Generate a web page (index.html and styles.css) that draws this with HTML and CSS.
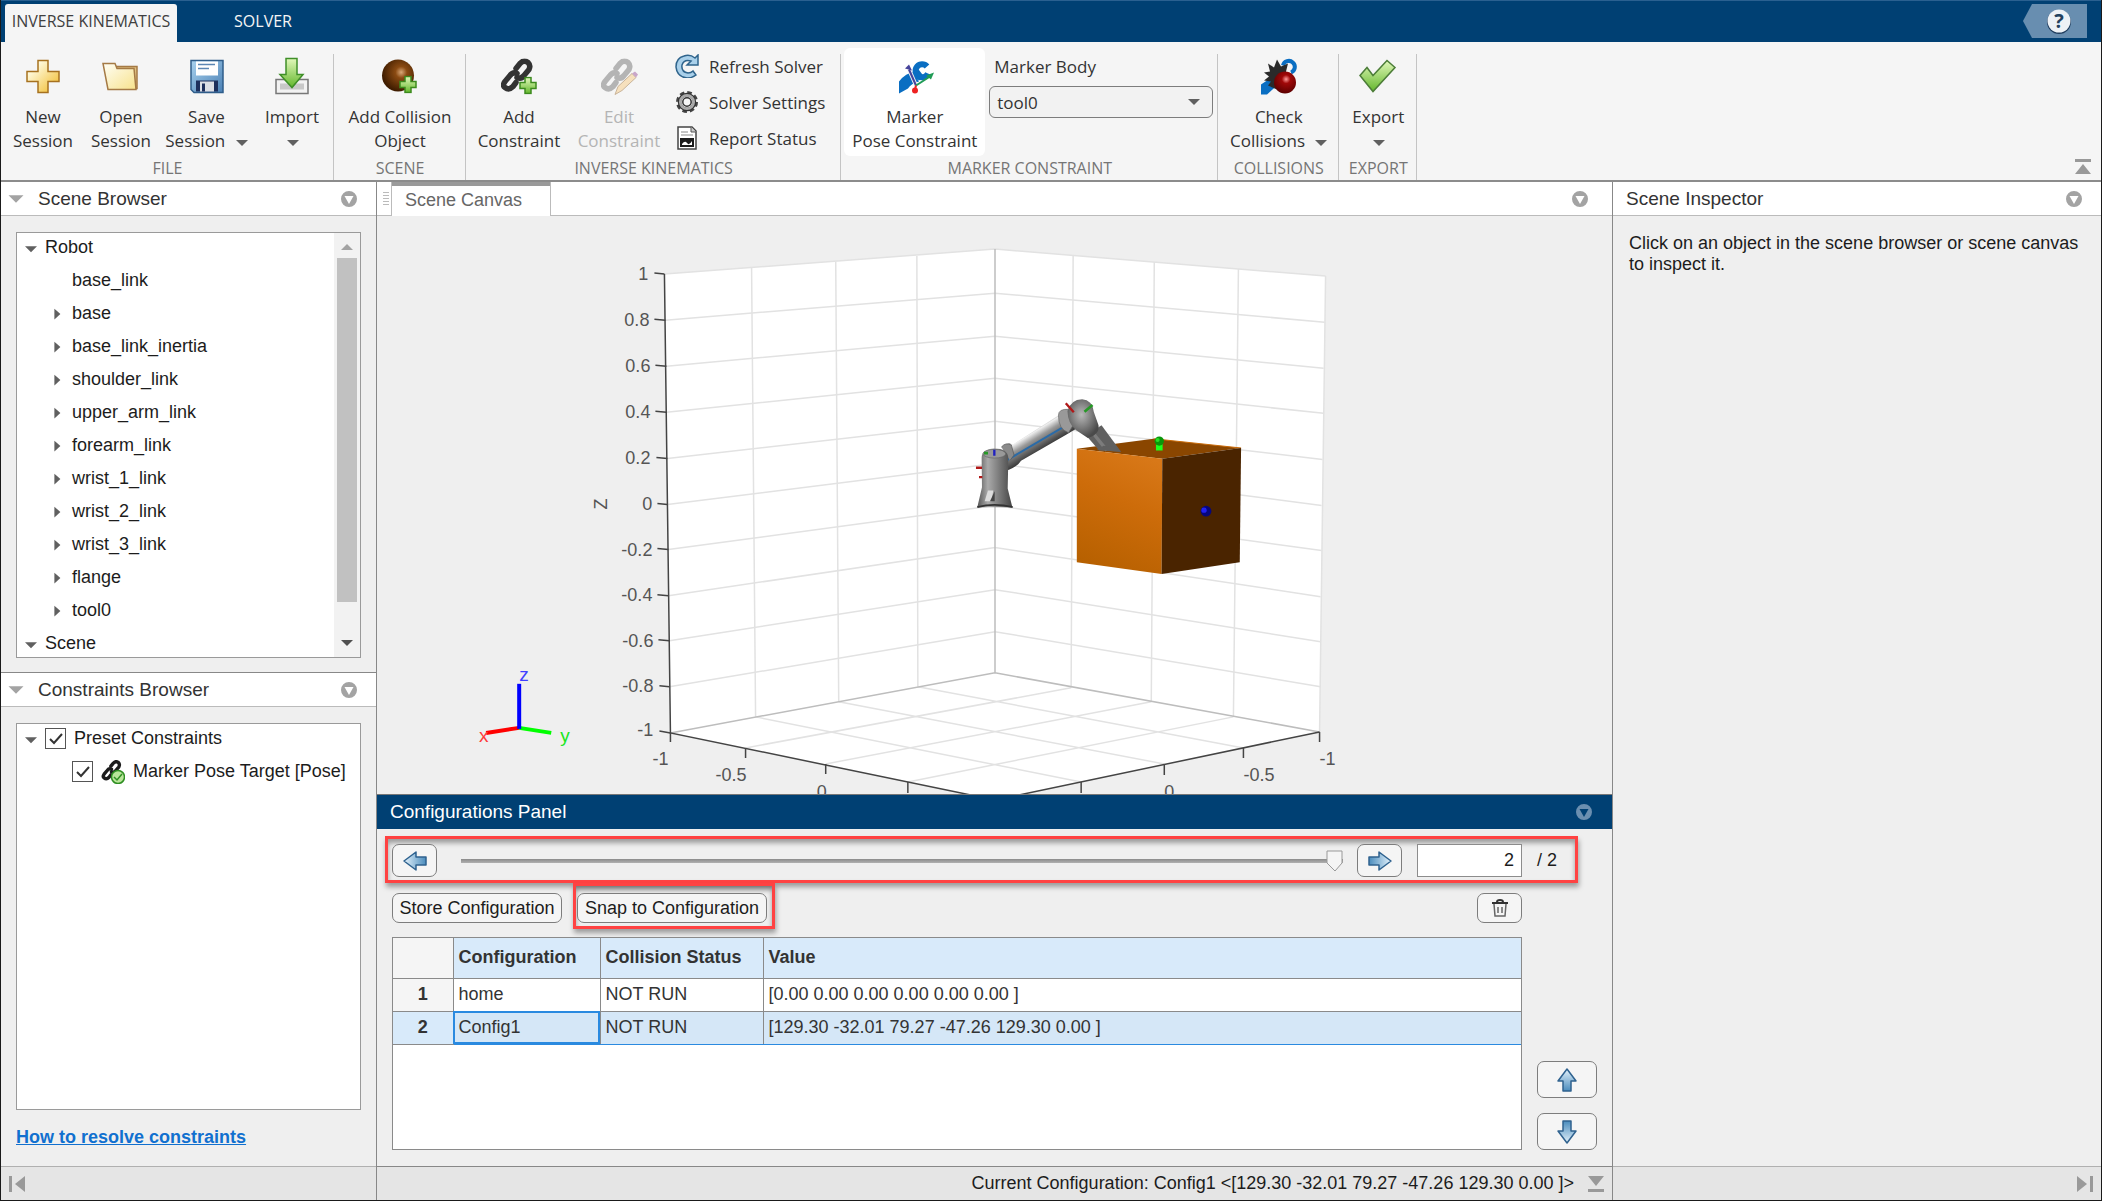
FILE: index.html
```html
<!DOCTYPE html>
<html lang="en">
<head>
  <meta charset="UTF-8" />
  <meta name="viewport" content="width=device-width, initial-scale=1.0"/>
  <title>Inverse Kinematics Designer</title>
  <link rel="stylesheet" href="styles.css">
</head>
<body>
  <!-- shared icons -->
  <svg class="defs" width="0" height="0" aria-hidden="true">
    <defs>
      <linearGradient id="gold" x1="0" y1="0" x2="1" y2="1"><stop offset="0.2" stop-color="#fffbe0"/><stop offset="1" stop-color="#f0b823"/></linearGradient>
      <linearGradient id="cream" x1="0" y1="0" x2="1" y2="1"><stop offset="0" stop-color="#fffef5"/><stop offset="1" stop-color="#f7e28c"/></linearGradient>
      <linearGradient id="green" x1="0" y1="0" x2="0" y2="1"><stop offset="0" stop-color="#e2f8bb"/><stop offset="1" stop-color="#63b72c"/></linearGradient>
      <linearGradient id="blue" x1="0" y1="0" x2="0" y2="1"><stop offset="0" stop-color="#e4f2fb"/><stop offset="1" stop-color="#4a8cbd"/></linearGradient>
      <linearGradient id="floppy" x1="0" y1="0" x2="1" y2="1"><stop offset="0" stop-color="#a9d2ee"/><stop offset="1" stop-color="#4a80b5"/></linearGradient>
      <radialGradient id="brown" cx="0.6" cy="0.4" r="0.6"><stop offset="0" stop-color="#d9a878"/><stop offset="0.3" stop-color="#8a4a12"/><stop offset="1" stop-color="#3e1c00"/></radialGradient>
      <radialGradient id="red" cx="0.55" cy="0.35" r="0.65"><stop offset="0" stop-color="#ff9c9c"/><stop offset="0.3" stop-color="#a00808"/><stop offset="1" stop-color="#5c0000"/></radialGradient>
      <symbol id="i-down" viewBox="0 0 12 8"><path d="M0 1h12l-6 6z"/></symbol>
      <symbol id="i-menu" viewBox="0 0 16 16"><path fill-rule="evenodd" d="M8 0a8 8 0 1 1 0 16A8 8 0 0 1 8 0zM3.5 5 8 13l4.500-8z"/></symbol>
      <symbol id="i-plus" viewBox="0 0 18 18"><path d="M6 1h6v5h5v6h-5v5H6v-5H1V6h5z" fill="url(#green)" stroke="#3c8a1e" stroke-width="1.500"/></symbol>
      <symbol id="i-chain" viewBox="0 0 32 34">
        <g fill="none" stroke="currentColor" stroke-width="5.500" stroke-linecap="round" stroke-linejoin="round">
          <path d="M15 10l4-5q4-4 8-1 3 3 1 7l-5 6q-3 4-7 2"/>
          <path d="M16 15q-4-2-7 2l-5 6q-3 4 0 6 4 3 8-1l3-4"/>
        </g>
      </symbol>
      <symbol id="i-arrow" viewBox="0 0 26 26"><path d="M13 2l9 12h-5v10H9V14H4z" fill="url(#blue)" stroke="#2f628f" stroke-width="1.500" stroke-linejoin="round"/></symbol>
    </defs>
  </svg>

  <header class="titlebar">
    <nav class="tabs">
      <button class="tab active">INVERSE KINEMATICS</button>
      <button class="tab">SOLVER</button>
    </nav>
    <button class="help" aria-label="Help">
      <svg width="64" height="34" viewBox="0 0 64 34">
        <path d="M0 17 9 0h55v34H9z" fill="#688eb0"/>
        <circle cx="36" cy="18" r="12" fill="#1f3d5e"/>
        <circle cx="36" cy="17" r="11.500" fill="#eef2f6"/>
        <text x="36" y="24" text-anchor="middle" class="help-mark">?</text>
      </svg>
    </button>
  </header>

  <div class="toolstrip">
    <section class="group">
      <div class="group-items">
        <button class="tool new">
          <svg width="36" height="36" viewBox="0 0 36 36"><path d="M13 2h10v11h11v10H23v11H13V23H2V13h11z" fill="url(#gold)" stroke="#a6711f" stroke-width="1.500"/></svg>
          <span>New<br>Session</span>
        </button>
        <button class="tool folder">
          <svg width="38" height="36" viewBox="0 0 38 36"><path d="M14 8h21v22H8z" fill="#e0c080" stroke="#a57a45" stroke-width="1.500"/><path d="M1 5h12l2 5h17l2 21H6z" fill="url(#cream)" stroke="#a57a45" stroke-width="1.500"/></svg>
          <span>Open<br>Session</span>
        </button>
        <button class="tool save">
          <svg width="36" height="36" viewBox="0 0 36 36"><path d="M2 2h32v32H5l-3-3z" fill="url(#floppy)" stroke="#2f5d8a" stroke-width="1.500"/><path d="M7 3h22v14H7z" fill="#fff"/><path d="M9 6h17M9 10h11" stroke="#5b86b4" stroke-width="1.500"/><path d="M7 22h22v11H7z" fill="#1d2f5c"/><path d="M11 23h14v10H11z" fill="#dcdfe6"/><path d="M13 25h3v8h-3z" fill="#1d2f5c"/></svg>
          <span>Save<br>Session <svg class="caret" width="12" height="8"><use href="#i-down"/></svg></span>
        </button>
        <button class="tool import">
          <svg width="36" height="38" viewBox="0 0 36 38"><path d="M2 22h32v14H2z" fill="#f2f2f2" stroke="#777" stroke-width="1.500"/><path d="M6 26h24v6H6z" fill="#c8c8c8"/><path d="M12 1h11v16h6L18 30 6 17h6z" fill="url(#green)" stroke="#3f8f28" stroke-width="1.500"/></svg>
          <span>Import<br><svg class="caret" width="12" height="8"><use href="#i-down"/></svg></span>
        </button>
      </div>
      <h2>FILE</h2>
    </section>

    <section class="group">
      <div class="group-items">
        <button class="tool collision">
          <svg width="38" height="36" viewBox="0 0 38 36"><circle cx="17" cy="17" r="16" fill="url(#brown)"/><use href="#i-plus" x="18" y="17" width="18" height="18"/></svg>
          <span>Add Collision<br>Object</span>
        </button>
      </div>
      <h2>SCENE</h2>
    </section>

    <section class="group">
      <div class="group-items">
        <button class="tool constraint">
          <svg width="38" height="38" viewBox="0 0 38 38"><use href="#i-chain" x="1" y="1" width="32" height="34"/><use href="#i-plus" x="19" y="19" width="18" height="18"/></svg>
          <span>Add<br>Constraint</span>
        </button>
        <button class="tool constraint" disabled>
          <svg width="38" height="38" viewBox="0 0 38 38"><use href="#i-chain" x="1" y="1" width="32" height="34"/><path d="M15 37l3-8 14-13 4 4-14 13z" fill="#f6e0bd" stroke="#c9b49a"/><path d="M32 16l4 4 2-3-3-3z" fill="#c9a6c9"/></svg>
          <span>Edit<br>Constraint</span>
        </button>
        <div class="tool-list">
          <button><svg width="24" height="24" viewBox="0 0 24 24"><path d="M23 1v10H12l4-4q-7-2-9 4-1 7 6 8 3 0 5-2l3 4q-4 3-9 3Q2 23 1 13 1 4 9 2q6-2 11 2z" fill="#a9d0ea" stroke="#2f648c" stroke-width="1.500"/></svg>Refresh Solver</button>
          <button><svg width="24" height="24" viewBox="0 0 24 24"><circle cx="12" cy="12" r="9.500" fill="none" stroke="#444" stroke-width="3" stroke-dasharray="4.500 2.960"/><circle cx="12" cy="12" r="7.500" fill="none" stroke="#333" stroke-width="3.500"/><circle cx="12" cy="12" r="6.800" fill="none" stroke="#aaa" stroke-width="2.500"/><circle cx="12" cy="12" r="4.200" fill="#f5f5f5" stroke="#333" stroke-width="1.500"/></svg>Solver Settings</button>
          <button><svg width="24" height="24" viewBox="0 0 24 24"><path d="M3 1h14l4 4v18H3z" fill="#fff" stroke="#444" stroke-width="1.500"/><path d="M16 1v5h5" fill="#ccc" stroke="#555"/><path d="M6 6h7M6 9h12" stroke="#888"/><path d="M5 12h14v9H5z" fill="#1b1b1b"/><path d="M7 18q3-4 5-1t5-2v4H7z" fill="#fff"/></svg>Report Status</button>
        </div>
      </div>
      <h2>INVERSE KINEMATICS</h2>
    </section>

    <section class="group">
      <div class="group-items">
        <button class="tool marker pressed">
          <svg width="38" height="38" viewBox="0 0 38 38"><path d="M3 24q7-9 15-9l5 9q-8 2-11 7l-9 5z" fill="#0a6ec2"/><path d="M16 15l5-5 7 9-5 4z" fill="#0a6ec2"/><path d="M31 9a6.500 6.500 0 1 0 1 7" fill="none" stroke="#0a6ec2" stroke-width="6"/><path d="M20 28l-7-16" stroke="#f5f5f5" stroke-width="4"/><path d="M20 28l-7-16" stroke="#46439b" stroke-width="2"/><path d="M20 28l14-9" stroke="#1f9b55" stroke-width="2"/><path d="M9 11l4-4 3 6z" fill="#46439b"/><path d="M38 15l-3 7-5-4z" fill="#1f9b55"/><path d="M20 28l-1 4" stroke="#ee2222" stroke-width="2"/><circle cx="19" cy="33" r="3" fill="#ee2222"/></svg>
          <span>Marker<br>Pose Constraint</span>
        </button>
        <div class="marker-body">
          <label for="markerBody">Marker Body</label>
          <select id="markerBody"><option>tool0</option></select>
        </div>
      </div>
      <h2>MARKER CONSTRAINT</h2>
    </section>

    <section class="group">
      <div class="group-items">
        <button class="tool check">
          <svg width="38" height="38" viewBox="0 0 38 38"><path d="M1 27l9-6 7 7-10 9H1z" fill="#0a6ec2"/><path d="M23 8a6 6 0 1 1 8 7" fill="none" stroke="#0a6ec2" stroke-width="4"/><path d="M8 6l6 4 3-8 4 7 7-3-2 8 4 14-13 4-9-4 3-4-7-1 5-4-5-4 6-1z" fill="#2a2a2a"/><circle cx="25" cy="25" r="11" fill="url(#red)"/></svg>
          <span>Check<br>Collisions <svg class="caret" width="12" height="8"><use href="#i-down"/></svg></span>
        </button>
      </div>
      <h2>COLLISIONS</h2>
    </section>

    <section class="group">
      <div class="group-items">
        <button class="tool export">
          <svg width="38" height="36" viewBox="0 0 38 36"><path d="M1 17l7-8 6 8L28 2l8 7-22 24z" fill="url(#green)" stroke="#4c7d38" stroke-width="1.500"/></svg>
          <span>Export<br><svg class="caret" width="12" height="8"><use href="#i-down"/></svg></span>
        </button>
      </div>
      <h2>EXPORT</h2>
    </section>

    <button class="collapse" aria-label="Minimize toolstrip"><svg width="16" height="16" viewBox="0 0 16 16"><path d="M0 0h16v3H0zM8 5l8 10H0z"/></svg></button>
  </div>

  <main class="workspace">
    <aside class="left">
      <section class="panel">
        <div class="panel-head">
          <svg class="fold" width="16" height="10"><use href="#i-down"/></svg>
          <h3>Scene Browser</h3>
          <button class="menu" aria-label="Scene Browser menu"><svg width="16" height="16"><use href="#i-menu"/></svg></button>
        </div>
        <div class="panel-body">
          <div class="box">
            <ul class="tree">
              <li class="open">Robot</li>
              <li class="child">base_link</li>
              <li class="child closed">base</li>
              <li class="child closed">base_link_inertia</li>
              <li class="child closed">shoulder_link</li>
              <li class="child closed">upper_arm_link</li>
              <li class="child closed">forearm_link</li>
              <li class="child closed">wrist_1_link</li>
              <li class="child closed">wrist_2_link</li>
              <li class="child closed">wrist_3_link</li>
              <li class="child closed">flange</li>
              <li class="child closed">tool0</li>
              <li class="open">Scene</li>
            </ul>
            <div class="scrollbar">
              <svg class="up" width="12" height="8"><use href="#i-down"/></svg>
              <div class="track"><div class="thumb"></div></div>
              <svg class="down" width="12" height="8"><use href="#i-down"/></svg>
            </div>
          </div>
        </div>
      </section>

      <section class="panel">
        <div class="panel-head">
          <svg class="fold" width="16" height="10"><use href="#i-down"/></svg>
          <h3>Constraints Browser</h3>
          <button class="menu" aria-label="Constraints Browser menu"><svg width="16" height="16"><use href="#i-menu"/></svg></button>
        </div>
        <div class="panel-body">
          <div class="box">
            <ul class="tree">
              <li class="open"><label><input type="checkbox" checked>Preset Constraints</label></li>
              <li class="child"><label><input type="checkbox" checked>
                <svg width="24" height="24" viewBox="0 0 24 24"><use href="#i-chain" x="0" y="0" width="21" height="21"/><circle cx="17" cy="17" r="6.500" fill="#b9e59a" stroke="#2f8f22" stroke-width="1.500"/><path d="M13 17l3 3 5-6" fill="none" stroke="#2f8f22" stroke-width="1.500"/></svg>Marker Pose Target [Pose]</label></li>
            </ul>
          </div>
          <a class="hint" href="#">How to resolve constraints</a>
        </div>
      </section>

      <footer class="status">
        <button aria-label="Collapse left"><svg width="16" height="16" viewBox="0 0 16 16"><path d="M0 0h3v16H0zM16 0v16L6 8z"/></svg></button>
      </footer>
    </aside>

    <section class="center">
      <div class="doc-tabs">
        <span class="grip"></span>
        <button class="doc-tab">Scene Canvas</button>
        <button class="menu" aria-label="Scene Canvas menu"><svg width="16" height="16"><use href="#i-menu"/></svg></button>
      </div>

      <div class="canvas">
        <svg viewBox="377 216 1235 577" preserveAspectRatio="xMidYMid slice">
          <defs>
            <linearGradient id="front" x1="0.600" y1="0" x2="0.300" y2="1"><stop offset="0" stop-color="#d87818"/><stop offset="0.400" stop-color="#cd6c0a"/><stop offset="1" stop-color="#b66000"/></linearGradient>
            <linearGradient id="metal" x1="0" y1="0" x2="1" y2="0"><stop offset="0" stop-color="#555"/><stop offset="0.300" stop-color="#aaa"/><stop offset="0.650" stop-color="#777"/><stop offset="1" stop-color="#444"/></linearGradient>
            <linearGradient id="arm" gradientUnits="userSpaceOnUse" x1="210" y1="140" x2="250" y2="205"><stop offset="0" stop-color="#666"/><stop offset="0.250" stop-color="#eee"/><stop offset="0.500" stop-color="#999"/><stop offset="1" stop-color="#3a3a3a"/></linearGradient>
            <radialGradient id="joint" cx="0.450" cy="0.400" r="0.600"><stop offset="0" stop-color="#b8b8b8"/><stop offset="1" stop-color="#4a4a4a"/></radialGradient>
          </defs>

          <!-- axes walls and floor -->
          <path d="M665 274 995 249 1325 276 1319 731 995 799 671 732z" fill="#fff"/>
          <g class="grid">
            <path d="M752 268 756 716M836 262l3 439M917 256l1 430M1073 256l-2 431M1154 262l-3 439M1238 269l-5 447M1325 276l-6 455"/>
            <path d="M665 274 995 249l330 27M666 320l329-27 329 29M667 366l328-30 328 32M667 412l328-34 328 35M668 458l327-37 327 38M668 504l327-41 326 42M669 549l326-44 326 45M669 595l326-48 325 49M670 640l325-51 325 52M670 686l325-55 325 55"/>
            <path d="M746 747l325-60M826 763l325-62M908 781l325-65M756 716l325 65M839 701l325 62M918 686l325 61"/>
          </g>
          <path class="edge" d="M995 249v423M671 732l324-60 324 59"/>
          <g class="axis">
            <path d="M665 274 671 732 995 799 1319 731"/>
            <path d="M655 273l10 1M655 319l11 1M656 365l11 1M656 411l11 1M657 457l11 1M658 503l10 1M658 548l11 1M658 594l11 1M659 639l11 1M660 685l10 1M660 730l11 2"/>
            <path d="M671 732v9M746 747v10M826 763v10M908 781v11M1319 731v10M1243 747v10M1164 763v11M1081 781v11"/>
          </g>
          <g class="ticks end">
            <text x="649" y="280">1</text><text x="650" y="326">0.8</text><text x="651" y="372">0.6</text><text x="651" y="418">0.4</text><text x="651" y="464">0.2</text><text x="653" y="509">0</text><text x="653" y="555">-0.2</text><text x="653" y="600">-0.4</text><text x="654" y="646">-0.6</text><text x="654" y="691">-0.8</text><text x="654" y="735">-1</text>
            <text x="669" y="764">-1</text><text x="747" y="780">-0.5</text><text x="827" y="797">0</text>
          </g>
          <g class="ticks">
            <text x="1319" y="764">-1</text><text x="1243" y="780">-0.5</text><text x="1164" y="797">0</text>
            <text x="-509" y="608" transform="rotate(-90)">Z</text>
          </g>

          <!-- orientation triad -->
          <g class="triad">
            <path d="M520 727l-33 5" stroke="#f00"/><path d="M520 727l32 5" stroke="#0f0"/><path d="M520 728v-45" stroke="#00f"/>
            <text x="480" y="741" fill="#ff3b3b">x</text><text x="561" y="741" fill="#1be61b">y</text><text x="520" y="680" fill="#4040ff">z</text>
          </g>

          <!-- robot and collision box -->
          <svg x="960" y="380" width="300" height="210" viewBox="0 0 900 630">
            <path d="M350 205 580 175 842 203 606 235z" fill="#8a4600"/>
            <path d="M580 175l262 28" stroke="#c96a08" stroke-width="3"/>
            <path d="M128 200l20-12 10 5 138-88q8-18 30-20l22 60-30 18-135 78q-15 22-45 30z" fill="url(#arm)"/>
            <path d="M140 240 340 122" stroke="#2a6ba8" stroke-width="6"/>
            <path d="M124 200q14-16 30-6l8 30-12 16" fill="#8a8a8a" stroke="#555" stroke-width="2"/>
            <path d="M295 105q0-20 30-18l25 30-25 40q-30-10-30-52" fill="#999" stroke="#666" stroke-width="2"/>
            <path d="M378 165l46-30 58 78-65-3z" fill="#606060"/>
            <path d="M400 160l40 50" stroke="#7c7c7c" stroke-width="10"/>
            <path d="M322 92q10-34 44-35 30 2 35 38l14 40q4 28-32 38l-36-24q-24-20-25-57z" fill="url(#joint)"/>
            <path d="M65 232q0-26 38-28 40 0 42 28l-2 92 14 56H52l14-60z" fill="url(#metal)"/>
            <ellipse cx="103" cy="220" rx="34" ry="13" fill="#999" stroke="#666" stroke-width="2"/>
            <path d="M84 330l-10 32h20l6-32z" fill="#ddd"/>
            <path d="M104 332l-14 30h14z" fill="#444"/>
            <path d="M52 380q50-14 106 0" fill="none" stroke="#333" stroke-width="5"/>
            <path d="M48 262h18M57 290h10M317 69l24 27" stroke="#b01818" stroke-width="7"/>
            <path d="M373 94l24-20M72 218h12" stroke="#269926" stroke-width="8"/>
            <path d="M103 208v18" stroke="#2020c0" stroke-width="7"/>
            <path d="M350 205 606 235 604 580 350 545z" fill="url(#front)"/>
            <path d="M410 208l20-12 40 5 13 14z" fill="#606060"/>
            <path d="M606 235 842 203 838 545 604 580z" fill="#4a2400"/>
            <path d="M587 190h20v20h-20z" fill="#1cff1c"/>
            <circle cx="597" cy="182" r="14" fill="#0a960a"/><circle cx="592" cy="179" r="6" fill="#27dd27"/>
            <circle cx="737" cy="392" r="16" fill="#06067c"/><circle cx="731" cy="389" r="8" fill="#2222ee"/>
          </svg>
        </svg>
      </div>

      <section class="configs">
        <div class="configs-head">
          <h3>Configurations Panel</h3>
          <button class="menu" aria-label="Configurations Panel menu"><svg width="16" height="16"><use href="#i-menu"/></svg></button>
        </div>

        <div class="stepper">
          <button class="btn" aria-label="Previous"><svg class="to-left" width="26" height="26"><use href="#i-arrow"/></svg></button>
          <input class="slider" type="range" min="1" max="2" value="2" aria-label="Configuration">
          <button class="btn" aria-label="Next"><svg class="to-right" width="26" height="26"><use href="#i-arrow"/></svg></button>
          <input class="index" id="index" type="text" value="2">
          <label for="index">/ 2</label>
        </div>

        <div class="actions">
          <button class="btn store">Store Configuration</button>
          <div class="callout"><button class="btn">Snap to Configuration</button></div>
          <button class="btn trash" aria-label="Delete"><svg width="18" height="20" viewBox="0 0 18 20"><path d="M1 5h16M6 4q0-2 3-2t3 2" fill="none" stroke="#333" stroke-width="2"/><path d="M3 6l1 12h10l1-12M7 9v6M11 9v6" fill="none" stroke="#666" stroke-width="1.500"/></svg></button>
        </div>

        <div class="table-row">
          <div class="table-box">
            <table>
              <colgroup><col class="c-num"><col class="c-name"><col class="c-status"><col></colgroup>
              <thead>
                <tr><th></th><th>Configuration</th><th>Collision Status</th><th>Value</th></tr>
              </thead>
              <tbody>
                <tr><th>1</th><td>home</td><td>NOT RUN</td><td>[0.00 0.00 0.00 0.00 0.00 0.00 ]</td></tr>
                <tr class="selected"><th>2</th><td class="current">Config1</td><td>NOT RUN</td><td>[129.30 -32.01 79.27 -47.26 129.30 0.00 ]</td></tr>
              </tbody>
            </table>
          </div>
          <div class="order">
            <button class="btn" aria-label="Move up"><svg width="26" height="26"><use href="#i-arrow"/></svg></button>
            <button class="btn" aria-label="Move down"><svg class="to-down" width="26" height="26"><use href="#i-arrow"/></svg></button>
          </div>
        </div>
      </section>

      <footer class="status">
        <span>Current Configuration: Config1 &lt;[129.30 -32.01 79.27 -47.26 129.30 0.00 ]&gt;</span>
        <button aria-label="Collapse bottom"><svg width="16" height="16" viewBox="0 0 16 16"><path d="M0 0h16L8 10zM0 13h16v3H0z"/></svg></button>
      </footer>
    </section>

    <aside class="right">
      <div class="panel-head">
        <h3>Scene Inspector</h3>
        <button class="menu" aria-label="Scene Inspector menu"><svg width="16" height="16"><use href="#i-menu"/></svg></button>
      </div>
      <p>Click on an object in the scene browser or scene canvas to inspect it.</p>
      <footer class="status">
        <button aria-label="Collapse right"><svg width="16" height="16" viewBox="0 0 16 16"><path d="M0 0v16l10-8zM13 0h3v16h-3z"/></svg></button>
      </footer>
    </aside>
  </main>
</body>
</html>
```
FILE: styles.css
```css
* {
    box-sizing: border-box;
}
body {
    margin: 0;
    height: 100vh;
    display: flex;
    flex-direction: column;
    border: 1px solid #1a1a1a;
    border-top: none;
    background-color: #efefef;
    font-family: "Liberation Sans", Arial, sans-serif;
    font-size: 18px;
    color: #1c1c1c;
    overflow: hidden;
}
button, input, select {
    font: inherit;
    color: inherit;
    margin: 0;
}
button {
    border: none;
    background: none;
    padding: 0;
    cursor: pointer;
}
svg {
    display: block;
    flex: none;
}
h2, h3 {
    margin: 0;
    font-size: inherit;
    font-weight: normal;
}
.defs {
    position: absolute;
}

/* title bar */
.titlebar {
    display: flex;
    justify-content: space-between;
    height: 42px;
    padding: 3px 14px 0 4px;
    border-top: 1px solid #2a6090;
    background-color: #004073;
    font-family: "Open Sans", "Noto Sans", sans-serif;
    font-size: 16px;
}
.tabs {
    display: flex;
}
.tab {
    width: 172px;
    padding-bottom: 5px;
    color: #f5f5f5;
    border-radius: 3px 3px 0 0;
}
.tab.active {
    background-color: #f5f5f5;
    color: #404040;
}
.help {
    height: 34px;
}
.help-mark {
    font: bold 20px "Open Sans", sans-serif;
    fill: #24425f;
}

/* toolstrip */
.toolstrip {
    display: flex;
    height: 140px;
    border-bottom: 2px solid #8c8c8c;
    background-color: #f5f5f5;
    font-family: "Open Sans", "Noto Sans", sans-serif;
    font-size: 17px;
    color: #333;
}
.group {
    display: flex;
    flex-direction: column;
    padding: 6px 3px 0;
    background: linear-gradient(#c4c4c4, #c4c4c4) right bottom / 1px 126px no-repeat;
}
.group-items {
    display: flex;
    height: 109px;
}
.group h2 {
    font-size: 16px;
    line-height: 24px;
    text-align: center;
    color: #757575;
}
.tool {
    display: flex;
    flex-direction: column;
    align-items: center;
    line-height: 24px;
}
.tool > svg {
    height: 57px;
}
.tool .caret {
    display: inline-block;
    margin-left: 6px;
    fill: #606060;
}
.tool.import .caret, .tool.export .caret {
    margin-left: 2px;
}
.tool:disabled {
    color: #b4b4b4;
}
.tool.new, .tool.folder, .tool.import {
    width: 78px;
}
.tool.save {
    width: 93px;
}
.tool.collision {
    width: 126px;
}
.tool.constraint {
    width: 100px;
}
.tool.marker {
    width: 141px;
}
.tool.check {
    width: 115px;
}
.tool.export {
    width: 72px;
}
.pressed {
    background-color: #fff;
    border-radius: 6px;
}
.tool-list {
    display: flex;
    flex-direction: column;
    padding: 0 13px 0 6px;
}
.tool-list button {
    display: flex;
    align-items: center;
    gap: 10px;
    height: 36px;
}
.marker-body {
    padding: 0 2px 0 4px;
}
.marker-body label {
    display: block;
    padding-left: 5px;
    line-height: 38px;
}
.marker-body select {
    width: 224px;
    height: 32px;
    padding: 0 7px;
    border: 1px solid #7d7d7d;
    border-radius: 6px;
    appearance: none;
    background: #f2f2f2 url("data:image/svg+xml,%3Csvg xmlns='http://www.w3.org/2000/svg' width='12' height='8'%3E%3Cpath d='M0 1h12l-6 6z' fill='%23606060'/%3E%3C/svg%3E") no-repeat right 12px center;
}
.collapse {
    align-self: flex-end;
    margin: 0 10px 5px auto;
    fill: #999;
}

/* workspace */
.workspace {
    flex: 1;
    min-height: 0;
    display: grid;
    grid-template-columns: 376px 1fr 489px;
}
.left {
    display: grid;
    grid-template-rows: 490fr 494fr 34px;
    min-height: 0;
    border-right: 1px solid #888;
}
.panel {
    display: flex;
    flex-direction: column;
    min-height: 0;
}
.panel + .panel {
    border-top: 1px solid #888;
}
.panel-head {
    display: flex;
    align-items: center;
    height: 34px;
    flex: none;
    padding: 0 19px 0 7px;
    background-color: #fff;
    border-bottom: 1px solid #bbb;
    font-size: 19px;
    color: #333;
}
.fold {
    margin-right: 14px;
    fill: #a3a3a3;
}
.menu {
    margin-left: auto;
    fill: #a3a3a3;
}
.panel-body {
    flex: 1;
    min-height: 0;
    display: flex;
    flex-direction: column;
    padding: 16px 15px 14px;
}
.box {
    flex: 1;
    min-height: 0;
    display: flex;
    border: 1px solid #9a9a9a;
    background-color: #fff;
    overflow: hidden;
}
.tree {
    flex: 1;
    list-style: none;
    margin: -2px 0 0;
    padding: 0;
}
.tree li {
    display: flex;
    align-items: center;
    height: 33px;
    padding-left: 8px;
    white-space: nowrap;
}
.tree li.child {
    padding-left: 35px;
}
.tree li::before {
    content: "";
    flex: none;
    width: 12px;
    height: 12px;
    margin-right: 8px;
}
.tree li.open::before {
    background-color: #606060;
    clip-path: polygon(0 40%, 100% 40%, 50% 90%);
}
.tree li.closed::before {
    background-color: #606060;
    clip-path: polygon(20% 10%, 70% 55%, 20% 100%);
}
.tree label {
    display: flex;
    align-items: center;
    gap: 8px;
}
.tree input {
    appearance: none;
    width: 21px;
    height: 21px;
    border: 1px solid #555;
    background: #fff url("data:image/svg+xml,%3Csvg xmlns='http://www.w3.org/2000/svg' width='19' height='19'%3E%3Cpath d='M4 10l4 4 8-9' fill='none' stroke='%23333' stroke-width='2'/%3E%3C/svg%3E") center no-repeat;
}
.scrollbar {
    display: flex;
    flex-direction: column;
    align-items: center;
    justify-content: space-between;
    width: 26px;
    padding: 10px 3px;
    background-color: #f2f2f2;
}
.scrollbar .track {
    flex: 1;
    width: 20px;
    margin: 7px 0;
}
.scrollbar .thumb {
    height: 92%;
    background-color: #c1c1c1;
}
.scrollbar .up {
    transform: rotate(180deg);
    fill: #a3a3a3;
}
.scrollbar .down {
    fill: #505050;
}
.hint {
    margin: 15px 0 3px;
    line-height: 24px;
    font-weight: bold;
    color: #1170cf;
}
.status {
    display: flex;
    align-items: center;
    height: 34px;
    padding: 0 8px;
    border-top: 1px solid #b0b0b0;
    background-color: #e5e5e5;
    fill: #999;
}

/* scene canvas */
.center {
    display: flex;
    flex-direction: column;
    min-width: 0;
    min-height: 0;
}
.doc-tabs {
    display: flex;
    align-items: center;
    height: 34px;
    flex: none;
    padding-right: 24px;
    background: linear-gradient(#bbb, #bbb) left bottom / 100% 1px no-repeat #fff;
}
.grip {
    width: 6px;
    height: 14px;
    margin: 0 2px 0 6px;
    background: repeating-linear-gradient(#bbb 0 1px, #fff 1px 3px);
}
.doc-tab {
    height: 34px;
    padding: 3px 28px 0 13px;
    border: 1px solid #bbb;
    border-width: 0 1px;
    box-shadow: inset 0 4px #9a9a9a;
    background-color: #fff;
    color: #666;
}
.canvas {
    flex: 1;
    min-height: 0;
}
.canvas > svg {
    width: 100%;
    height: 100%;
}
.grid {
    fill: none;
    stroke: #e2e2e2;
    stroke-width: 1.5;
}
.edge {
    fill: none;
    stroke: #bdbdbd;
    stroke-width: 1.5;
}
.axis {
    fill: none;
    stroke: #444;
    stroke-width: 1.5;
}
.ticks {
    font-size: 18px;
    fill: #555;
}
.end {
    text-anchor: end;
}
.triad {
    fill: none;
    stroke-width: 4;
}
.triad text {
    font-size: 19px;
}

/* configurations */
.configs {
    border-top: 1px solid #777;
}
.configs-head {
    display: flex;
    align-items: center;
    height: 34px;
    padding: 0 20px 0 13px;
    background-color: #004073;
    color: #fff;
    font-size: 19px;
}
.configs-head .menu {
    fill: #6b8fb0;
}
.btn {
    display: flex;
    align-items: center;
    justify-content: center;
    width: 45px;
    height: 33px;
    border: 1px solid #7d7d7d;
    border-radius: 7px;
    background-color: #f5f5f5;
}
.to-left {
    transform: rotate(-90deg);
}
.to-right {
    transform: rotate(90deg);
}
.to-down {
    transform: rotate(180deg);
}
.stepper, .callout {
    border: 3px solid #ff4242;
    box-shadow: 1px 4px 5px rgba(0, 0, 0, 0.35), inset 0 4px 5px rgba(0, 0, 0, 0.35);
}
.stepper {
    display: flex;
    align-items: center;
    margin: 7px 34px 0 8px;
    padding: 5px 4px 3px;
}
.slider {
    flex: 1;
    height: 24px;
    margin: 0 14px 0 24px;
    appearance: none;
    background: linear-gradient(#8a8a8a, #b0b0b0) center / 100% 4px no-repeat;
}
.slider::-webkit-slider-thumb {
    appearance: none;
    width: 17px;
    height: 22px;
    background: url("data:image/svg+xml,%3Csvg xmlns='http://www.w3.org/2000/svg' width='17' height='22'%3E%3Cpath d='M1 1h15v12l-7 8-8-8z' fill='%23f5f5f5' stroke='%23999'/%3E%3C/svg%3E") no-repeat;
}
.index {
    width: 105px;
    height: 33px;
    margin: 0 15px;
    padding: 0 7px;
    border: 1px solid #8c8c8c;
    background-color: #fff;
    text-align: right;
}
.stepper label {
    width: 34px;
}
.actions {
    display: flex;
    align-items: flex-end;
    padding: 0 90px 0 15px;
}
.actions .btn {
    height: 30px;
}
.actions > .btn {
    margin-bottom: 6px;
}
.actions .store {
    width: 170px;
}
.callout {
    margin-left: 11px;
    padding: 7px 5px 3px 1px;
}
.callout .btn {
    width: 190px;
}
.trash {
    margin-left: auto;
}
.table-row {
    display: flex;
    gap: 15px;
    height: 229px;
    padding: 0 15px 16px;
    margin-top: 8px;
}
.table-box {
    flex: 1;
    border: 1px solid #8a8a8a;
    background-color: #fff;
}
table {
    width: 100%;
    table-layout: fixed;
    border-collapse: collapse;
}
.c-num {
    width: 60px;
}
.c-name {
    width: 147px;
}
.c-status {
    width: 163px;
}
th, td {
    height: 33px;
    padding: 0 5px;
    border: 1px solid #8a8a8a;
    text-align: left;
    color: #333;
}
tr > :first-child {
    border-left: none;
}
tr > :last-child {
    border-right: none;
}
thead th {
    height: 40px;
    border-top: none;
    background-color: #d8eafa;
}
tbody th, thead th:first-child {
    text-align: center;
    background-color: #f5f5f5;
}
.selected th {
    background-color: #d8eafa;
}
.selected td {
    background-color: #d5e7f7;
    border-top-color: #2a8ae0;
    border-bottom-color: #2a8ae0;
}
.selected td.current {
    outline: 2px solid #2a8ae0;
    outline-offset: -2px;
}
.order {
    display: flex;
    flex-direction: column;
    justify-content: flex-end;
    gap: 15px;
}
.order .btn {
    width: 60px;
    height: 37px;
}
.center .status {
    flex: none;
    justify-content: flex-end;
    gap: 14px;
    border-top-color: #888;
}

/* inspector */
.right {
    display: flex;
    flex-direction: column;
    border-left: 1px solid #888;
}
.right .panel-head {
    padding-left: 13px;
}
.right p {
    flex: 1;
    margin: 0;
    padding: 17px 12px 0 16px;
    line-height: 21px;
}
.right .status {
    justify-content: flex-end;
}
```
